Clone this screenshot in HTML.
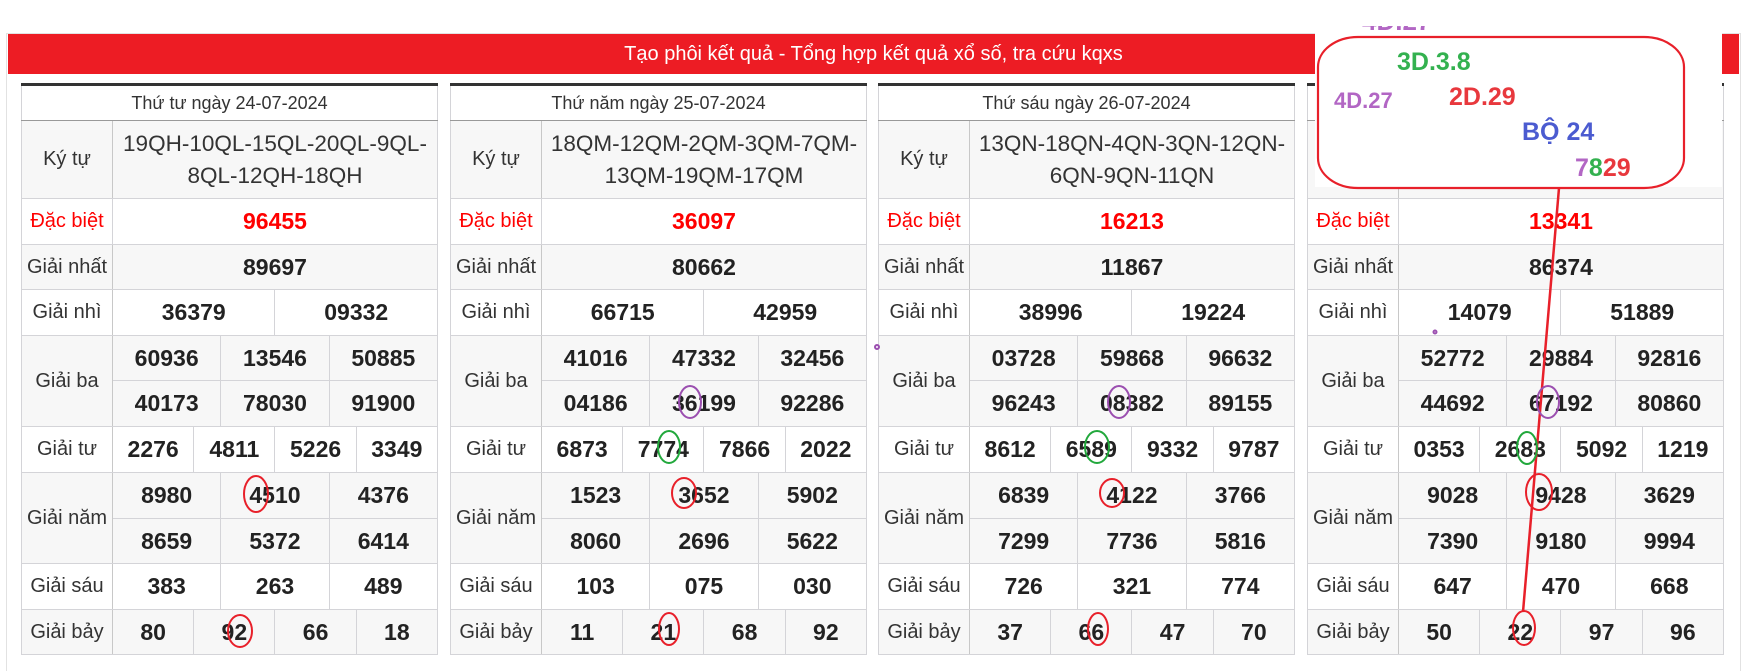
<!DOCTYPE html>
<html><head><meta charset="utf-8"><style>
*{margin:0;padding:0;box-sizing:border-box}
html{width:1754px;height:671px;overflow:hidden}
body{width:1754px;height:671px;background:#fff;position:relative;overflow:hidden;font-family:"Liberation Sans",Arial,sans-serif}
.frame{position:absolute;left:6px;top:33px;width:1735px;height:638px;border:1px solid #e2e2e2;border-bottom:none}
.bar{position:absolute;left:8px;top:34px;width:1731px;height:40px;background:#ed1c24;color:#fff;font-size:20px;text-align:center;line-height:40px}
table{position:absolute;top:83px;width:417px;border-collapse:collapse;table-layout:fixed;border:1px solid #8a8a8a;border-top:3px solid #333}
td{border:1px solid #d4d4d8;text-align:center;vertical-align:middle;color:#222;font-weight:bold;font-size:23px;padding:0;white-space:nowrap}
td.l{font-weight:normal;font-size:20px;color:#333;border-right:1px solid #c8c8c8}
td.h{font-weight:normal;font-size:18px;color:#333;height:36px;border-bottom:1px solid #999}
td.k{font-weight:normal;font-size:22.5px;color:#333;line-height:32px;white-space:normal}
tr.g td{background:#f7f7f7}
td.red{color:#f00}
td.lr{color:#f00;font-weight:normal;font-size:20px}
.r46 td{height:46px}.r45 td{height:45px}
</style></head><body>
<div class="frame"></div>
<div class="bar">Tạo phôi kết quả - Tổng hợp kết quả xổ số, tra cứu kqxs</div>

<table style="left:21px"><colgroup><col style="width:91px"><col span="12"></colgroup>
<tr><td class="h" colspan="13">Thứ tư ngày 24-07-2024</td></tr>
<tr class="g"><td class="l" style="height:78px">Ký tự</td><td class="k" colspan="12">19QH-10QL-15QL-20QL-9QL-<br>8QL-12QH-18QH</td></tr>
<tr class="r46"><td class="lr">Đặc biệt</td><td class="red" colspan="12">96455</td></tr>
<tr class="g r45"><td class="l">Giải nhất</td><td colspan="12">89697</td></tr>
<tr class="r46"><td class="l">Giải nhì</td><td colspan="6">36379</td><td colspan="6">09332</td></tr>
<tr class="g r45"><td class="l" rowspan="2">Giải ba</td><td colspan="4">60936</td><td colspan="4">13546</td><td colspan="4">50885</td></tr>
<tr class="g r46"><td colspan="4">40173</td><td colspan="4">78030</td><td colspan="4">91900</td></tr>
<tr class="r46"><td class="l">Giải tư</td><td colspan="3">2276</td><td colspan="3">4811</td><td colspan="3">5226</td><td colspan="3">3349</td></tr>
<tr class="g r46"><td class="l" rowspan="2">Giải năm</td><td colspan="4">8980</td><td colspan="4">4510</td><td colspan="4">4376</td></tr>
<tr class="g r45"><td colspan="4">8659</td><td colspan="4">5372</td><td colspan="4">6414</td></tr>
<tr class="r46"><td class="l">Giải sáu</td><td colspan="4">383</td><td colspan="4">263</td><td colspan="4">489</td></tr>
<tr class="g r45"><td class="l">Giải bảy</td><td colspan="3">80</td><td colspan="3">92</td><td colspan="3">66</td><td colspan="3">18</td></tr>
</table>

<table style="left:450px"><colgroup><col style="width:91px"><col span="12"></colgroup>
<tr><td class="h" colspan="13">Thứ năm ngày 25-07-2024</td></tr>
<tr class="g"><td class="l" style="height:78px">Ký tự</td><td class="k" colspan="12">18QM-12QM-2QM-3QM-7QM-<br>13QM-19QM-17QM</td></tr>
<tr class="r46"><td class="lr">Đặc biệt</td><td class="red" colspan="12">36097</td></tr>
<tr class="g r45"><td class="l">Giải nhất</td><td colspan="12">80662</td></tr>
<tr class="r46"><td class="l">Giải nhì</td><td colspan="6">66715</td><td colspan="6">42959</td></tr>
<tr class="g r45"><td class="l" rowspan="2">Giải ba</td><td colspan="4">41016</td><td colspan="4">47332</td><td colspan="4">32456</td></tr>
<tr class="g r46"><td colspan="4">04186</td><td colspan="4">36199</td><td colspan="4">92286</td></tr>
<tr class="r46"><td class="l">Giải tư</td><td colspan="3">6873</td><td colspan="3">7774</td><td colspan="3">7866</td><td colspan="3">2022</td></tr>
<tr class="g r46"><td class="l" rowspan="2">Giải năm</td><td colspan="4">1523</td><td colspan="4">3652</td><td colspan="4">5902</td></tr>
<tr class="g r45"><td colspan="4">8060</td><td colspan="4">2696</td><td colspan="4">5622</td></tr>
<tr class="r46"><td class="l">Giải sáu</td><td colspan="4">103</td><td colspan="4">075</td><td colspan="4">030</td></tr>
<tr class="g r45"><td class="l">Giải bảy</td><td colspan="3">11</td><td colspan="3">21</td><td colspan="3">68</td><td colspan="3">92</td></tr>
</table>

<table style="left:878px"><colgroup><col style="width:91px"><col span="12"></colgroup>
<tr><td class="h" colspan="13">Thứ sáu ngày 26-07-2024</td></tr>
<tr class="g"><td class="l" style="height:78px">Ký tự</td><td class="k" colspan="12">13QN-18QN-4QN-3QN-12QN-<br>6QN-9QN-11QN</td></tr>
<tr class="r46"><td class="lr">Đặc biệt</td><td class="red" colspan="12">16213</td></tr>
<tr class="g r45"><td class="l">Giải nhất</td><td colspan="12">11867</td></tr>
<tr class="r46"><td class="l">Giải nhì</td><td colspan="6">38996</td><td colspan="6">19224</td></tr>
<tr class="g r45"><td class="l" rowspan="2">Giải ba</td><td colspan="4">03728</td><td colspan="4">59868</td><td colspan="4">96632</td></tr>
<tr class="g r46"><td colspan="4">96243</td><td colspan="4">08382</td><td colspan="4">89155</td></tr>
<tr class="r46"><td class="l">Giải tư</td><td colspan="3">8612</td><td colspan="3">6589</td><td colspan="3">9332</td><td colspan="3">9787</td></tr>
<tr class="g r46"><td class="l" rowspan="2">Giải năm</td><td colspan="4">6839</td><td colspan="4">4122</td><td colspan="4">3766</td></tr>
<tr class="g r45"><td colspan="4">7299</td><td colspan="4">7736</td><td colspan="4">5816</td></tr>
<tr class="r46"><td class="l">Giải sáu</td><td colspan="4">726</td><td colspan="4">321</td><td colspan="4">774</td></tr>
<tr class="g r45"><td class="l">Giải bảy</td><td colspan="3">37</td><td colspan="3">66</td><td colspan="3">47</td><td colspan="3">70</td></tr>
</table>

<table style="left:1307px"><colgroup><col style="width:91px"><col span="12"></colgroup>
<tr><td class="h" colspan="13">Thứ bảy ngày 27-07-2024</td></tr>
<tr class="g"><td class="l" style="height:78px">Ký tự</td><td class="k" colspan="12">&nbsp;</td></tr>
<tr class="r46"><td class="lr">Đặc biệt</td><td class="red" colspan="12">13341</td></tr>
<tr class="g r45"><td class="l">Giải nhất</td><td colspan="12">86374</td></tr>
<tr class="r46"><td class="l">Giải nhì</td><td colspan="6">14079</td><td colspan="6">51889</td></tr>
<tr class="g r45"><td class="l" rowspan="2">Giải ba</td><td colspan="4">52772</td><td colspan="4">29884</td><td colspan="4">92816</td></tr>
<tr class="g r46"><td colspan="4">44692</td><td colspan="4">67192</td><td colspan="4">80860</td></tr>
<tr class="r46"><td class="l">Giải tư</td><td colspan="3">0353</td><td colspan="3">2683</td><td colspan="3">5092</td><td colspan="3">1219</td></tr>
<tr class="g r46"><td class="l" rowspan="2">Giải năm</td><td colspan="4">9028</td><td colspan="4">9428</td><td colspan="4">3629</td></tr>
<tr class="g r45"><td colspan="4">7390</td><td colspan="4">9180</td><td colspan="4">9994</td></tr>
<tr class="r46"><td class="l">Giải sáu</td><td colspan="4">647</td><td colspan="4">470</td><td colspan="4">668</td></tr>
<tr class="g r45"><td class="l">Giải bảy</td><td colspan="3">50</td><td colspan="3">22</td><td colspan="3">97</td><td colspan="3">96</td></tr>
</table>

<div style="position:absolute;left:1315px;top:28px;width:407px;height:159px;background:#fff"></div>
<div style="position:absolute;left:1362px;top:26px;width:80px;height:8px;overflow:hidden"><div style="position:absolute;top:-20px;left:0;font:bold 26px 'Liberation Sans',sans-serif;color:#b266c4">4D.27</div></div>
<svg width="1754" height="671" style="position:absolute;left:0;top:0" fill="none">
<rect x="1318" y="37" width="366" height="151" rx="40" ry="30" stroke="#e8202a" stroke-width="2.2"/>
<line x1="1559" y1="188" x2="1523" y2="612" stroke="#e8202a" stroke-width="2.5"/>
<g stroke-width="2">
<ellipse cx="256" cy="494" rx="12" ry="18" stroke="#e8202a"/>
<ellipse cx="240" cy="631" rx="12" ry="16" stroke="#e8202a"/>
<ellipse cx="690" cy="402" rx="11" ry="16" stroke="#9b4fb0"/>
<ellipse cx="669" cy="447" rx="11" ry="16" stroke="#22a83c"/>
<ellipse cx="684" cy="493" rx="12" ry="15" stroke="#e8202a"/>
<ellipse cx="669" cy="629" rx="10" ry="16" stroke="#e8202a"/>
<ellipse cx="1119" cy="402" rx="11" ry="16" stroke="#9b4fb0"/>
<ellipse cx="1097" cy="447" rx="12" ry="16" stroke="#22a83c"/>
<ellipse cx="1112" cy="493" rx="12" ry="14" stroke="#e8202a"/>
<ellipse cx="1098" cy="629" rx="10" ry="16" stroke="#e8202a"/>
<ellipse cx="1548" cy="402" rx="11" ry="16" stroke="#9b4fb0"/>
<ellipse cx="1527" cy="448" rx="10" ry="16" stroke="#22a83c"/>
<ellipse cx="1539" cy="492" rx="13" ry="18" stroke="#e8202a"/>
<ellipse cx="1524" cy="628" rx="11" ry="17" stroke="#e8202a"/>
<circle cx="877" cy="347" r="2" stroke="#9b4fb0"/>
<circle cx="1435" cy="332" r="1.5" stroke="#9b4fb0"/>
</g>
<g font-family="Liberation Sans, sans-serif" font-weight="bold">
<text x="1397" y="70" font-size="25" fill="#33b14f">3D.3.8</text>
<text x="1334" y="108" font-size="22" fill="#b266c4">4D.27</text>
<text x="1449" y="105" font-size="25" fill="#e8383d">2D.29</text>
<text x="1522" y="140" font-size="25" fill="#4b5bd0">BỘ 24</text>
<text x="1575" y="176" font-size="25"><tspan fill="#b266c4">7</tspan><tspan fill="#33b14f">8</tspan><tspan fill="#e8383d">29</tspan></text>
</g>
</svg>
</body></html>
